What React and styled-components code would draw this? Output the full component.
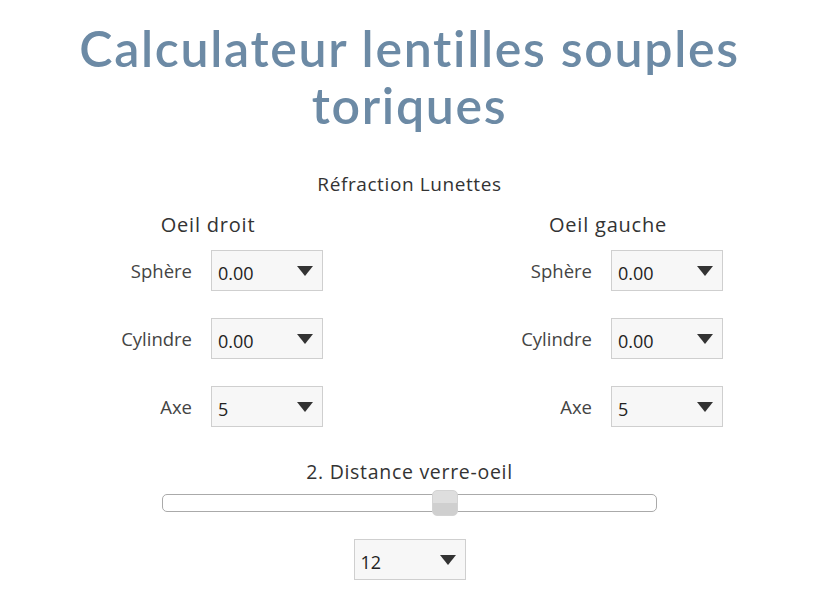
import React, { useState } from 'react';
import styled, { createGlobalStyle } from 'styled-components';

const GlobalStyle = createGlobalStyle`
  body {
    margin: 8px;
    background: #fff;
    font-family: 'Open Sans', 'Liberation Sans', sans-serif;
    color: #333;
  }
`;

const Page = styled.div`
  display: flex;
  flex-direction: column;
  align-items: center;
`;

const Title = styled.h1`
  margin: 12px 0 0;
  font-family: Lato, 'Open Sans', sans-serif;
  font-weight: 600;
  font-size: 50px;
  letter-spacing: 1.7px;
  line-height: 57px;
  color: #6c8aa5;
  text-align: center;
`;

const Section = styled.h3`
  margin: 37px 0 0;
  font-family: 'Open Sans', sans-serif;
  font-weight: 400;
  font-size: 19px;
  letter-spacing: 0.6px;
  color: #333;
`;

const Columns = styled.div`
  display: grid;
  grid-template-columns: 400px 400px;
  width: 100%;
  margin-top: 14px;
`;

const Eye = styled.div`
  display: flex;
  flex-direction: column;
`;

const EyeTitle = styled.h4`
  margin: 0 0 12px;
  font-family: 'Open Sans', sans-serif;
  font-weight: 400;
  font-size: 20px;
  letter-spacing: 0.8px;
  text-align: center;
  color: #333;
`;

const Row = styled.div`
  display: flex;
  align-items: center;
  height: 41px;
  margin-bottom: 27px;
`;

const Label = styled.label`
  width: 184px;
  padding-right: 19px;
  text-align: right;
  font-family: 'Open Sans', sans-serif;
  font-size: 18.5px;
  color: #444;
`;

const SelectWrap = styled.div`
  position: relative;
  width: 112px;
  height: 41px;
`;

const Select = styled.select`
  appearance: none;
  width: 100%;
  height: 100%;
  box-sizing: border-box;
  border: 1px solid #cfcfcf;
  border-radius: 0;
  background: #f7f7f7;
  padding: 4px 0 0 6px;
  font-family: 'Open Sans', 'Liberation Sans', sans-serif;
  font-size: 18px;
  color: #222;
  outline: none;
`;

const Arrow = styled.svg`
  position: absolute;
  right: 10px;
  top: 16px;
  pointer-events: none;
`;

const Distance = styled.div`
  display: flex;
  flex-direction: column;
  align-items: center;
  margin-top: 4px;
`;

const DistanceTitle = styled.h3`
  margin: 0 0 9px;
  font-family: 'Open Sans', sans-serif;
  font-weight: 400;
  font-size: 19.5px;
  letter-spacing: 0.7px;
  color: #333;
`;

const Range = styled.input`
  appearance: none;
  -webkit-appearance: none;
  width: 495px;
  height: 18px;
  margin: 0 0 27px;
  box-sizing: border-box;
  border: 1px solid #aaa;
  border-radius: 5px;
  background: #fff;
  outline: none;

  &::-webkit-slider-thumb {
    -webkit-appearance: none;
    width: 26px;
    height: 26px;
    border-radius: 5px;
    border: 1px solid #d3d3d3;
    background: linear-gradient(#dedede 0%, #dedede 50%, #cfcfcf 50%, #cfcfcf 100%);
  }
`;

const SelectField = ({ value, options }) => {
  const [v, setV] = useState(value);
  return (
    <SelectWrap>
      <Select value={v} onChange={(e) => setV(e.target.value)}>
        {options.map((o) => (
          <option key={o}>{o}</option>
        ))}
      </Select>
      <Arrow width="16" height="10" viewBox="0 0 16 10">
        <path d="M0 0 H16 L8 10 Z" fill="#333" />
      </Arrow>
    </SelectWrap>
  );
};

const powers = ['-1.00', '-0.50', '0.00', '0.50', '1.00'];
const axes = ['5', '10', '15', '20'];

const EyeColumn = ({ title }) => (
  <Eye>
    <EyeTitle>{title}</EyeTitle>
    <Row>
      <Label>Sphère</Label>
      <SelectField value="0.00" options={powers} />
    </Row>
    <Row>
      <Label>Cylindre</Label>
      <SelectField value="0.00" options={powers} />
    </Row>
    <Row>
      <Label>Axe</Label>
      <SelectField value="5" options={axes} />
    </Row>
  </Eye>
);

export default function App() {
  const [dist, setDist] = useState(1191);
  return (
    <Page>
      <GlobalStyle />
      <Title>
        Calculateur lentilles souples
        <br />
        toriques
      </Title>
      <Section>Réfraction Lunettes</Section>
      <Columns>
        <EyeColumn title="Oeil droit" />
        <EyeColumn title="Oeil gauche" />
      </Columns>
      <Distance>
        <DistanceTitle>2. Distance verre-oeil</DistanceTitle>
        <Range
          type="range"
          min="500"
          max="1700"
          value={dist}
          onChange={(e) => setDist(e.target.value)}
        />
        <SelectField value="12" options={['10', '11', '12', '13', '14']} />
      </Distance>
    </Page>
  );
}
